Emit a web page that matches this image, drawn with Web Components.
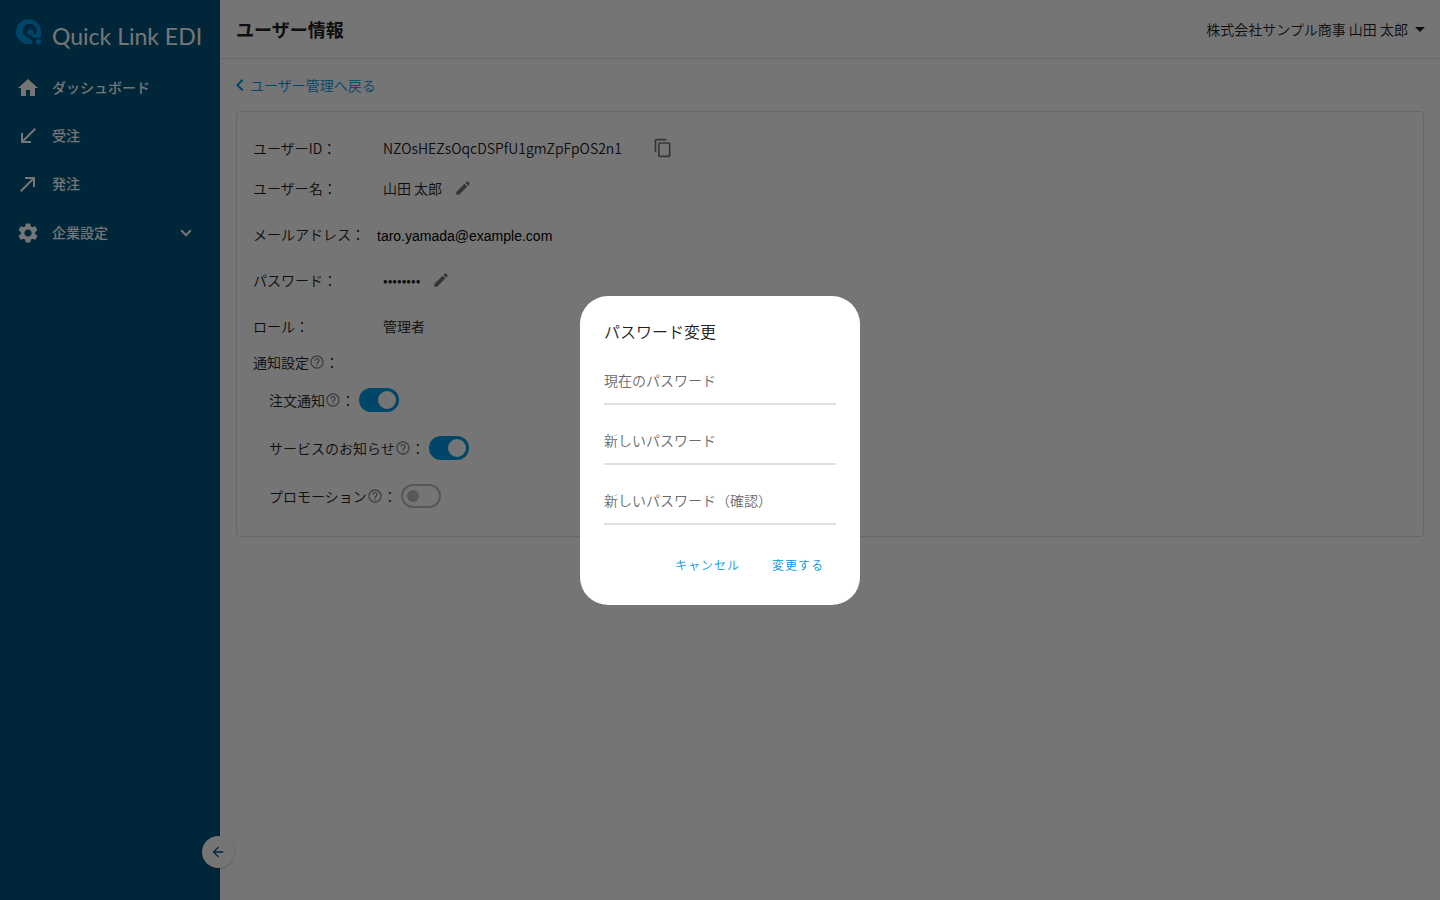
<!DOCTYPE html>
<html lang="ja">
<head>
<meta charset="utf-8">
<title>ユーザー情報 | Quick Link EDI</title>
<style>
:root{--brand:#0099e5;--side:#00537c;--line:#e0e0e0;--ink:#212121;--icon:#757575}
html,body{margin:0;height:100%}
body{font-family:"Noto Sans CJK JP",sans-serif;font-size:14px;font-weight:350;color:var(--ink);background:#fff}
</style>
</head>
<body>
<edi-app></edi-app>
<script>
const ICONS={
home:'M10 20v-6h4v6h5v-8h3L12 3 2 12h3v8z',
received:'M20 5.410 18.590 4 7 15.590V9H5v10h10v-2H8.410z',
made:'M9 5v2h6.590L4 18.590 5.410 20 17 8.410V15h2V5z',
gear:'M19.140 12.940c.040-.300.060-.610.060-.940 0-.320-.020-.640-.070-.940l2.030-1.580c.180-.140.230-.410.120-.610l-1.920-3.320c-.120-.220-.370-.290-.590-.220l-2.390.960c-.500-.380-1.030-.700-1.620-.940l-.360-2.540c-.040-.240-.240-.410-.480-.410h-3.840c-.240 0-.430.170-.470.410l-.360 2.540c-.590.240-1.130.570-1.620.940l-2.390-.960c-.220-.080-.470 0-.590.220L2.740 8.870c-.120.210-.080.470.120.610l2.030 1.580c-.050.300-.090.630-.090.940s.020.640.070.940l-2.030 1.580c-.180.140-.230.410-.120.610l1.920 3.320c.120.220.370.290.590.220l2.390-.960c.500.380 1.030.700 1.620.940l.360 2.540c.050.240.240.410.480.410h3.840c.240 0 .440-.170.470-.410l.360-2.540c.590-.240 1.130-.560 1.620-.940l2.390.960c.220.080.470 0 .590-.220l1.920-3.320c.120-.220.070-.470-.120-.610l-2.010-1.580zM12 15.600c-1.980 0-3.600-1.620-3.600-3.600s1.620-3.600 3.600-3.600 3.600 1.620 3.600 3.600-1.620 3.600-3.600 3.600z',
down:'M7.100 7.900 12 12.800l4.900-4.900L18.700 9.700 12 16.400 5.300 9.700z',
left:'M15.410 7.410 14 6l-6 6 6 6 1.410-1.410L10.830 12z',
back:'M20 11H7.830l5.590-5.590L12 4l-8 8 8 8 1.410-1.410L7.830 13H20z',
drop:'M7 10l5 5 5-5z',
copy:'M16 1H4c-1.100 0-2 .9-2 2v14h2V3h12V1zm3 4H8c-1.100 0-2 .9-2 2v14c0 1.100.9 2 2 2h11c1.100 0 2-.9 2-2V7c0-1.100-.9-2-2-2zm0 16H8V7h11v14z',
edit:'M3 17.250V21h3.750L17.810 9.940l-3.750-3.750L3 17.250zM20.710 7.040c.39-.39.39-1.020 0-1.410l-2.340-2.340c-.39-.39-1.020-.39-1.410 0l-1.830 1.830 3.750 3.750 1.830-1.830z',
help:'M11 18h2v-2h-2v2zm1-16C6.480 2 2 6.480 2 12s4.480 10 10 10 10-4.480 10-10S17.520 2 12 2zm0 18c-4.410 0-8-3.590-8-8s3.590-8 8-8 8 3.590 8 8-3.590 8-8 8zm0-14c-2.210 0-4 1.790-4 4h2c0-1.100.9-2 2-2s2 .9 2 2c0 2-3 1.750-3 5h2c0-2.250 3-2.500 3-5 0-2.210-1.790-4-4-4z'};
function define(name,render){
  customElements.define(name,class extends HTMLElement{
    connectedCallback(){
      if(this.shadowRoot)return;
      this.attachShadow({mode:'open'}).innerHTML=render(this);
    }
  });
}
define('edi-icon',el=>`<style>:host{display:block;width:24px;height:24px;flex:none}svg{display:block;width:100%;height:100%;fill:currentColor}</style><svg viewBox="0 0 24 24" aria-hidden="true"><path d="${ICONS[el.getAttribute('name')]}"/></svg>`);

define('edi-logo',()=>`<style>
:host{display:flex;align-items:flex-start;gap:10px;height:48px;padding:18px 0 0 16px;box-sizing:border-box}
.mark{width:26px;height:28px;flex:none}
.word{padding-top:4px;white-space:nowrap;font-family:Lato,sans-serif;font-size:23px;line-height:28px;font-weight:400;color:#fff}
</style>
<svg class="mark" viewBox="0 0 26 28" aria-hidden="true"><g fill="#0097e0"><path d="M13 26.300A12.500 12.500 0 1 1 25 14.500V17a3 3 0 0 1-3 3h-1L18.500 17.800A7 7 0 1 0 12 19.500L14 20.500l2.500 2.500v1.500a1.800 1.800 0 0 1-1.800 1.800z"/><circle cx="14.300" cy="14.200" r="3"/><circle cx="22.600" cy="23.800" r="2.600"/></g><path d="M14.500 14.500l3.800 3.800" fill="none" stroke="#0097e0" stroke-width="3" stroke-linecap="round"/></svg>
<span class="word">Quick Link EDI</span>`);

define('nav-item',el=>`<style>
:host{display:block}
a{display:flex;align-items:center;height:48px;padding:0 24px 0 16px;color:#fff;text-decoration:none;font-weight:500;line-height:24px}
span{flex:1;margin-left:12px;padding-bottom:2px}
.chev{width:20px;height:20px}
</style><a href="#"><edi-icon name="${el.getAttribute('icon')}"></edi-icon><span><slot></slot></span>${el.hasAttribute('group')?'<edi-icon class="chev" name="down"></edi-icon>':''}</a>`);

define('side-nav',()=>`<style>
:host{display:flex;flex-direction:column;position:relative;width:220px;flex:none;background:var(--side)}
nav{display:block;margin-top:16px}
nav-item[group]{margin-top:1px}
button{position:absolute;right:-14px;bottom:32px;width:32px;height:32px;padding:8px;border:0;border-radius:50%;background:#fff;color:var(--side);box-shadow:0 1px 3px #0003}
button edi-icon{width:16px;height:16px}
</style>
<edi-logo></edi-logo>
<nav><nav-item icon="home">ダッシュボード</nav-item><nav-item icon="received">受注</nav-item><nav-item icon="made">発注</nav-item><nav-item icon="gear" group>企業設定</nav-item></nav>
<button type="button" aria-label="メニューを閉じる"><edi-icon name="back"></edi-icon></button>`);

define('top-bar',()=>`<style>
:host{display:flex;align-items:center;justify-content:space-between;height:58px;padding:0 8px 0 16px;border-bottom:1px solid var(--line)}
h1{margin:0;font-size:18px;line-height:24px;font-weight:700}
button{display:flex;align-items:center;border:0;padding:0;background:none;font:inherit;color:inherit;line-height:24px}
</style><h1>ユーザー情報</h1><button type="button">株式会社サンプル商事 山田 太郎<edi-icon name="drop"></edi-icon></button>`);

define('info-row',el=>`<style>
:host{display:flex;align-items:center;height:46px}
.label{width:130px;flex:none;white-space:nowrap}
.value{display:flex;align-items:center;gap:12px}
:host([mail]) .label{width:124px}
:host([mail]) .value{font-family:"Liberation Sans",sans-serif;font-weight:400;padding-top:4px;color:#000}
:host([copy]){box-sizing:border-box;height:36px;padding-top:2px}
:host([copy]) .value{gap:31px}
button{display:block;border:0;padding:0;background:none;color:var(--icon)}
button edi-icon{width:18px;height:18px}
button.copy edi-icon{width:20px;height:20px}
</style><div class="label">${el.getAttribute('label')}：</div><div class="value"><slot></slot>${el.hasAttribute('edit')?'<button type="button" aria-label="編集"><edi-icon name="edit"></edi-icon></button>':''}${el.hasAttribute('copy')?'<button class="copy" type="button" aria-label="コピー"><edi-icon name="copy"></edi-icon></button>':''}</div>`);

define('help-label',()=>`<style>:host{display:flex;align-items:center}edi-icon{width:16px;height:16px;color:#8c8c8c}</style><slot></slot><edi-icon name="help"></edi-icon><span>：</span>`);

define('toggle-row',el=>`<style>
:host{display:flex;align-items:center;height:48px;padding-left:16px}
label{display:flex;align-items:center;gap:4px}
input{appearance:none;box-sizing:border-box;display:flex;align-items:center;width:40px;height:24px;margin:0;padding:0 4px;border:2px solid #bdbdbd;border-radius:12px}
input::before{content:"";width:12px;height:12px;border-radius:50%;background:#bdbdbd}
input:checked{justify-content:flex-end;border:0;padding:0 3px;background:var(--brand)}
input:checked::before{width:18px;height:18px;background:#fff}
</style><label><help-label><slot></slot></help-label><input type="checkbox" role="switch" ${el.hasAttribute('on')?'checked':''}></label>`);

define('user-panel',()=>`<style>
:host{display:block;padding:14px 16px}
a{display:flex;align-items:center;gap:3px;height:24px;color:var(--brand);text-decoration:none}
a edi-icon{margin:0 -5px 0 -8px}
section{box-sizing:border-box;margin-top:14px;padding:17px 16px 16px;border:1px solid var(--line);border-radius:4px}
.notify{height:26px;margin-bottom:1px}
</style>
<a href="#"><edi-icon name="left"></edi-icon>ユーザー管理へ戻る</a>
<section>
<info-row label="ユーザーID" copy>NZOsHEZsOqcDSPfU1gmZpFpOS2n1</info-row>
<info-row label="ユーザー名" edit>山田 太郎</info-row>
<info-row mail label="メールアドレス">taro.yamada@example.com</info-row>
<info-row label="パスワード" edit>••••••••</info-row>
<info-row label="ロール">管理者</info-row>
<help-label class="notify">通知設定</help-label>
<toggle-row on>注文通知</toggle-row><toggle-row on>サービスのお知らせ</toggle-row><toggle-row>プロモーション</toggle-row>
</section>`);

define('password-field',el=>`<style>
:host{display:block}
input{box-sizing:border-box;display:block;width:100%;height:48px;padding:0;border:0;border-bottom:2px solid var(--line);border-radius:0;background:none;font:inherit;color:inherit;outline:0}
input::placeholder{color:#6b6b6b;opacity:1}
</style><input type="password" placeholder="${el.getAttribute('label')}" aria-label="${el.getAttribute('label')}">`);

define('password-dialog',()=>`<style>
:host{position:fixed;inset:0;display:grid;place-items:center;background:rgba(0,0,0,.54)}
form{box-sizing:border-box;width:280px;padding:24px 24px 22px;border-radius:28px;background:#fff}
h2{margin:0 0 15px;font-size:16px;line-height:22px;font-weight:350}
.fields{display:grid;gap:12px}
.actions{display:flex;justify-content:flex-end;gap:8px;margin-top:22px}
button{height:36px;padding:0 12px;border:0;background:none;color:var(--brand);font:inherit;font-size:12px;letter-spacing:1px}
</style><form role="dialog" aria-label="パスワード変更"><h2>パスワード変更</h2><div class="fields">
<password-field label="現在のパスワード"></password-field><password-field label="新しいパスワード"></password-field><password-field label="新しいパスワード（確認）"></password-field></div>
<div class="actions"><button type="button">キャンセル</button><button type="button">変更する</button></div></form>`);

define('edi-app',()=>`<style>:host{display:flex;min-height:100vh}main{flex:1;min-width:0}</style><side-nav></side-nav><main><top-bar></top-bar><user-panel></user-panel></main><password-dialog></password-dialog>`);
</script>
</body>
</html>
